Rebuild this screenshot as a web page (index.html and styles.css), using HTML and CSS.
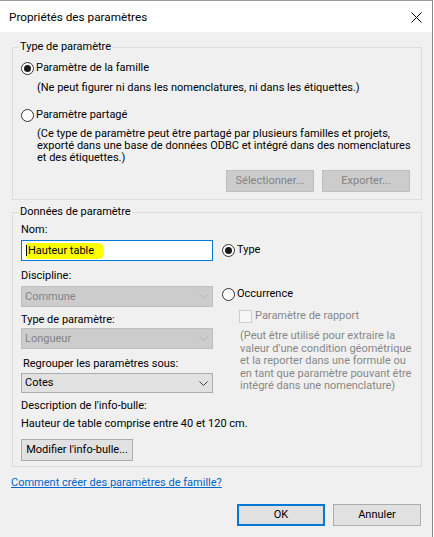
FILE: index.html
```html
<!DOCTYPE html>
<html lang="fr">
<head>
<meta charset="utf-8">
<title>Propriétés des paramètres</title>
<link rel="stylesheet" href="styles.css">
</head>
<body>
<div class="window">
  <div class="titlebar">
    <span class="title">Propriétés des paramètres</span>
    <span class="close"><svg width="11" height="11" viewBox="0 0 11 11"><path d="M0.5 0.5 L10.5 10.5 M10.5 0.5 L0.5 10.5" stroke="#000" stroke-width="1" fill="none"/></svg></span>
  </div>
  <div class="content">
    <fieldset class="group group-type">
      <legend>Type de paramètre</legend>
      <div class="radio-row r-famille"><span class="radio checked"></span><span>Paramètre de la famille</span></div>
      <div class="note n-famille">(Ne peut figurer ni dans les nomenclatures, ni dans les étiquettes.)</div>
      <div class="radio-row r-partage"><span class="radio"></span><span>Paramètre partagé</span></div>
      <div class="para p-partage">(Ce type de paramètre peut être partagé par plusieurs familles et projets,<br>exporté dans une base de données ODBC et intégré dans des nomenclatures<br>et des étiquettes.)</div>
      <div class="btn-row">
        <span class="btn disabled">Sélectionner...</span>
        <span class="btn disabled">Exporter...</span>
      </div>
    </fieldset>

    <fieldset class="group group-data">
      <legend>Données de paramètre</legend>
      <div class="data-grid">
        <div class="col-left">
          <div class="label l-nom">Nom:</div>
          <div class="input"><span class="hl"><span class="caret"></span>Hauteur table</span></div>
          <div class="label l-discipline">Discipline:</div>
          <div class="select disabled s-discipline"><span>Commune</span><svg class="chev" width="9" height="5" viewBox="0 0 9 5"><path d="M0.5 0.5 L4.5 4.5 L8.5 0.5" fill="none" stroke-width="1"/></svg></div>
          <div class="label l-type">Type de paramètre:</div>
          <div class="select disabled s-type"><span>Longueur</span><svg class="chev" width="9" height="5" viewBox="0 0 9 5"><path d="M0.5 0.5 L4.5 4.5 L8.5 0.5" fill="none" stroke-width="1"/></svg></div>
          <div class="label l-group">Regrouper les paramètres sous:</div>
          <div class="select s-group"><span>Cotes</span><svg class="chev" width="9" height="5" viewBox="0 0 9 5"><path d="M0.5 0.5 L4.5 4.5 L8.5 0.5" fill="none" stroke-width="1"/></svg></div>
          <div class="label l-desc">Description de l'info-bulle:</div>
          <div class="label l-desc-text">Hauteur de table comprise entre 40 et 120 cm.</div>
          <div class="btn b-modify">Modifier l'info-bulle...</div>
        </div>
        <div class="col-right">
          <div class="radio-row r-type"><span class="radio checked"></span><span>Type</span></div>
          <div class="radio-row r-occ"><span class="radio"></span><span>Occurrence</span></div>
          <div class="check-row"><span class="checkbox"></span><span>Paramètre de rapport</span></div>
          <div class="para p-rapport">(Peut être utilisé pour extraire la<br>valeur d'une condition géométrique<br>et la reporter dans une formule ou<br>en tant que paramètre pouvant être<br>intégré dans une nomenclature)</div>
        </div>
      </div>
    </fieldset>

    <a class="help-link" href="#">Comment créer des paramètres de famille?</a>

    <div class="footer">
      <span class="btn default">OK</span>
      <span class="btn">Annuler</span>
    </div>
  </div>
</div>
</body>
</html>
```

FILE: styles.css
```css
html, body {
  margin: 0;
  padding: 0;
  background: #ffffff;
}

body {
  font-family: Roboto, "Liberation Sans", sans-serif;
  font-size: 11px;
  line-height: 14px;
  color: #000;
}

.window {
  width: 433px;
  height: 537px;
  box-sizing: border-box;
  border-top: 1px solid #9a9a9a;
  border-right: 1px solid #8a8a8a;
  background: #f0f0f0;
  overflow: hidden;
}

.titlebar {
  height: 31px;
  background: #ffffff;
  display: flex;
  align-items: center;
  justify-content: space-between;
  padding: 0 10px 0 9px;
}

.title {
  font-size: 11.75px;
}

.close {
  display: flex;
  margin-top: 1px;
}

.content {
  padding: 8px 10px 0 12px;
}

.group {
  margin: 0;
  border: 1px solid #dcdcdc;
  min-width: 0;
}

.group legend {
  margin-left: -2px;
  padding: 0 1px;
  line-height: 14px;
}

.group-type {
  padding: 7px 11px 7px 8px;
}

.group-data {
  margin-top: 5px;
  padding: 4px 11px 5px 8px;
}

.radio-row {
  display: flex;
  align-items: center;
  gap: 2px;
  height: 14px;
  white-space: nowrap;
}

.radio {
  width: 13px;
  height: 13px;
  box-sizing: border-box;
  border: 1px solid #333;
  border-radius: 50%;
  background: #fff;
  display: flex;
  align-items: center;
  justify-content: center;
  flex: none;
}

.radio.checked::after {
  content: "";
  width: 7px;
  height: 7px;
  border-radius: 50%;
  background: #1a1a1a;
}

.note {
  margin: 6px 0 0 16px;
  white-space: nowrap;
}

.r-partage {
  margin-top: 13px;
}

.para {
  line-height: 12px;
  white-space: nowrap;
}

.p-partage {
  margin: 6px 0 0 16px;
}

.btn-row {
  display: flex;
  justify-content: flex-end;
  gap: 8px;
  margin-top: 6px;
}

.btn {
  display: flex;
  align-items: center;
  justify-content: center;
  box-sizing: border-box;
  width: 88px;
  height: 22px;
  border: 1px solid #adadad;
  background: #e1e1e1;
  white-space: nowrap;
}

.btn.disabled {
  background: #cccccc;
  border-color: #bfbfbf;
  color: #838383;
}

.btn.default {
  border: 2px solid #0078d7;
}

.data-grid {
  display: grid;
  grid-template-columns: 192px 1fr;
  column-gap: 9px;
}

.col-left,
.col-right {
  display: flex;
  flex-direction: column;
  align-items: flex-start;
}

.label {
  height: 14px;
  white-space: nowrap;
}

.input {
  width: 192px;
  height: 21px;
  box-sizing: border-box;
  border: 1px solid #0078d7;
  background: #fff;
  margin-top: 3px;
  display: flex;
  align-items: center;
  padding-left: 4px;
}

.hl {
  display: flex;
  align-items: center;
  height: 16px;
  padding: 0 10px 0 0;
  background: #ffff00;
  border-radius: 2px 6px 6px 2px;
}

.caret {
  width: 1px;
  height: 11px;
  background: #000;
  margin-right: 1px;
}

.select {
  width: 192px;
  height: 21px;
  box-sizing: border-box;
  border: 1px solid #adadad;
  background: #e1e1e1;
  display: flex;
  align-items: center;
  justify-content: space-between;
  padding: 0 4px 0 3px;
}

.select .chev {
  stroke: #3c3c3c;
}

.select.disabled {
  background: #cccccc;
  border-color: #bfbfbf;
  color: #838383;
}

.select.disabled .chev {
  stroke: #b3b3b3;
}

.l-discipline { margin-top: 8px; }
.s-discipline { margin-top: 3px; }
.l-type { margin-top: 6px; }
.s-type { margin-top: 1px; }
.l-group { margin-top: 8px; margin-left: 2px; }
.s-group { margin-top: 2px; height: 20px; }
.l-desc { margin-top: 6px; }
.l-desc-text { margin-top: 4px; }

.b-modify {
  width: 112px;
  margin-top: 8px;
}

.r-type { margin-top: 20px; }
.r-occ { margin-top: 30px; }

.check-row {
  display: flex;
  align-items: center;
  gap: 3px;
  height: 14px;
  margin: 8px 0 0 17px;
  color: #888;
  white-space: nowrap;
}

.checkbox {
  width: 13px;
  height: 13px;
  box-sizing: border-box;
  border: 1px solid #cccccc;
  background: #f7f7f7;
  flex: none;
}

.p-rapport {
  margin: 7px 0 0 18px;
  line-height: 12.5px;
  color: #888;
}

.help-link {
  display: block;
  width: max-content;
  margin: 9px 0 0 -1px;
  color: #0066cc;
  text-decoration: underline;
  line-height: 14px;
}

.footer {
  display: flex;
  justify-content: flex-end;
  gap: 8px;
  margin: 14px 1px 0 0;
}
```
